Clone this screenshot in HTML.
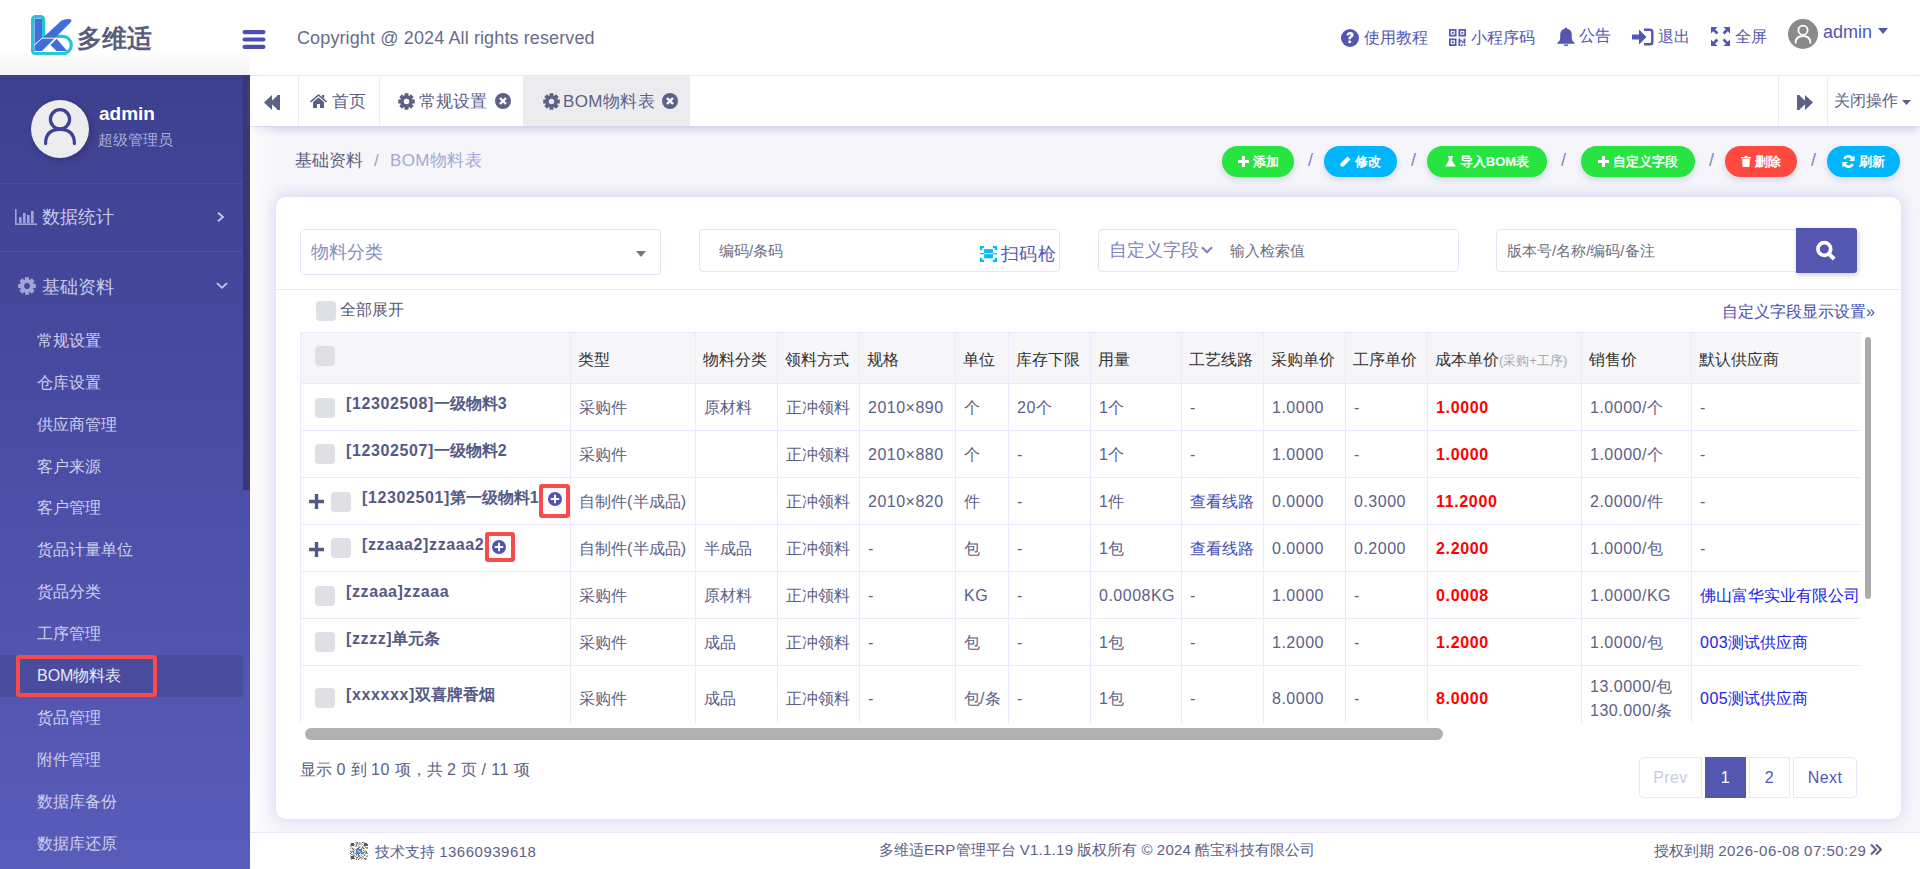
<!DOCTYPE html>
<html><head><meta charset="utf-8">
<style>
*{box-sizing:border-box;margin:0;padding:0}
html,body{width:1920px;height:869px;overflow:hidden}
body{position:relative;background:#f5f5fa;font-family:"Liberation Sans",sans-serif;color:#5d6187}
.abs{position:absolute}
svg{display:block}
#hdr{left:0;top:0;width:1920px;height:75px;background:#fff}
#side{left:0;top:75px;width:250px;height:794px;background:linear-gradient(180deg,#3d3f8e 0%,#4a4ca4 45%,#5a5cba 100%)}
#tabs{left:250px;top:75px;width:1670px;height:51px;background:#fff;border-top:1px solid #e6e5f4;box-shadow:0 5px 8px -2px rgba(140,140,220,.42)}
.t{white-space:nowrap;line-height:1}
</style></head><body>

<!-- HEADER -->
<div id="hdr" class="abs">
  <svg class="abs" style="left:25px;top:10px" width="52" height="50" viewBox="25 10 52 50">
    <path d="M32.6,19.5 a3,3 0 0 1 3,-3 h5 a3,3 0 0 1 3,3 v16.8 h19 a8.7,8.7 0 0 1 0,17.4 h-27 a3,3 0 0 1 -3,-3z" fill="none" stroke="#1ec8d6" stroke-width="3.2"/>
    <path d="M34.5,18.6 h7.5 v19.3 l-7.5,7z" fill="#426ed9"/>
    <path d="M34.5,45.6 l27,-25 q3,-1.8 7.5,-1.6 q3.5,0.3 2,3 l-29,29 h-7.5z" fill="#426ed9"/>
    <path d="M50.4,45 l6.2,-6.2 l10.6,12.2 h-10.6z" fill="#426ed9"/>
    <path d="M42,38.2 h14.5" stroke="#fff" stroke-width="0.9"/>
    <path d="M34.2,45.2 l8.3,-7.6" stroke="#fff" stroke-width="0.8"/>
  </svg>
  <div class="abs t" style="left:77px;top:26px;font-size:25px;font-weight:bold;color:#585c7e;letter-spacing:0px">多维适</div>
  <svg class="abs" style="left:242px;top:30px" width="24" height="20" viewBox="0 0 24 20">
    <rect x="0.5" y="0" width="23" height="4.2" rx="2.1" fill="#4b4fb2"/>
    <rect x="0.5" y="7.4" width="23" height="4.2" rx="2.1" fill="#4b4fb2"/>
    <rect x="0.5" y="14.8" width="23" height="4.2" rx="2.1" fill="#4b4fb2"/>
  </svg>
  <div class="abs t" style="left:297px;top:29px;font-size:18px;color:#686c88;letter-spacing:0.12px">Copyright @ 2024 All rights reserved</div>
  <!-- right icons -->
  <svg class="abs" style="left:1341px;top:29px" width="18" height="18" viewBox="0 0 18 18">
    <circle cx="9" cy="9" r="9" fill="#5356b2"/>
    <path d="M5.6,6.6 q0.2,-3.6 3.6,-3.6 q3.4,0 3.4,3 q0,1.6 -1.7,2.5 q-0.9,0.5 -0.9,1.3 v0.4 h-2.6 v-0.7 q0,-1.5 1.3,-2.3 q1.1,-0.6 1.1,-1.2 q0,-0.8 -0.9,-0.8 q-1,0 -1.2,1.4z" fill="#fff"/>
    <rect x="7.4" y="11.6" width="2.6" height="2.5" fill="#fff"/>
  </svg>
  <div class="abs t" style="left:1364px;top:30px;font-size:16px;color:#5356b2">使用教程</div>
  <svg class="abs" style="left:1449px;top:29px" width="17" height="17" viewBox="0 0 17 17" fill="#5356b2">
    <path d="M0,0h7.5v7.5h-7.5zM1.7,1.7v4.1h4.1v-4.1zM9.5,0h7.5v7.5h-7.5zM11.2,1.7v4.1h4.1v-4.1zM0,9.5h7.5v7.5h-7.5zM1.7,11.2v4.1h4.1v-4.1z" fill-rule="evenodd"/>
    <rect x="2.8" y="2.8" width="1.9" height="1.9"/><rect x="12.3" y="2.8" width="1.9" height="1.9"/><rect x="2.8" y="12.3" width="1.9" height="1.9"/>
    <rect x="9.5" y="9.5" width="1.8" height="7.5"/><rect x="11.3" y="10.8" width="1.6" height="1.6"/><rect x="12.9" y="12.2" width="1.6" height="1.8"/><rect x="14.5" y="9.5" width="1.8" height="5"/><rect x="12" y="15.3" width="1.5" height="1.7"/><rect x="14.8" y="15.3" width="1.5" height="1.7"/>
  </svg>
  <div class="abs t" style="left:1471px;top:30px;font-size:16px;color:#5356b2">小程序码</div>
  <svg class="abs" style="left:1557px;top:27px" width="18" height="19" viewBox="0 0 18 19" fill="#5356b2">
    <path d="M9,0.5 q1.2,0 1.2,1.3 q4.6,1 4.6,6.2 v3.5 q0,2.2 2.8,4.3 v1 h-17.2 v-1 q2.8,-2.1 2.8,-4.3 v-3.5 q0,-5.2 4.6,-6.2 q0,-1.3 1.2,-1.3z"/>
    <path d="M6.8,17.5 h4.4 q0,1.9 -2.2,1.9 q-2.2,0 -2.2,-1.9z"/>
  </svg>
  <div class="abs t" style="left:1579px;top:28px;font-size:16px;color:#5356b2">公告</div>
  <svg class="abs" style="left:1632px;top:28px" width="22" height="18" viewBox="0 0 22 18" fill="#5356b2">
    <path d="M0,6.5 h7 v-5 l7.5,7.5 l-7.5,7.5 v-5 h-7z"/>
    <path d="M12,0.5 h6 q3.5,0 3.5,3.5 v10 q0,3.5 -3.5,3.5 h-6 v-2.4 h5.8 q1.3,0 1.3,-1.3 v-9.6 q0,-1.3 -1.3,-1.3 h-5.8z"/>
  </svg>
  <div class="abs t" style="left:1658px;top:29px;font-size:16px;color:#5356b2">退出</div>
  <svg class="abs" style="left:1711px;top:27px" width="19" height="19" viewBox="0 0 19 19" fill="#5356b2">
    <path d="M0,0 h6.5 l-2.3,2.3 l3.2,3.2 l-1.9,1.9 l-3.2,-3.2 l-2.3,2.3z"/>
    <path d="M19,0 v6.5 l-2.3,-2.3 l-3.2,3.2 l-1.9,-1.9 l3.2,-3.2 l-2.3,-2.3z"/>
    <path d="M0,19 v-6.5 l2.3,2.3 l3.2,-3.2 l1.9,1.9 l-3.2,3.2 l2.3,2.3z"/>
    <path d="M19,19 h-6.5 l2.3,-2.3 l-3.2,-3.2 l1.9,-1.9 l3.2,3.2 l2.3,-2.3z"/>
  </svg>
  <div class="abs t" style="left:1735px;top:29px;font-size:16px;color:#5356b2">全屏</div>
  <svg class="abs" style="left:1788px;top:19px" width="30" height="30" viewBox="0 0 30 30">
    <circle cx="15" cy="15" r="15" fill="#8a8a8a"/>
    <circle cx="15" cy="11.2" r="4.6" fill="none" stroke="#fff" stroke-width="1.8"/>
    <path d="M7.5,24.5 q0,-7.5 7.5,-7.5 q7.5,0 7.5,7.5" fill="none" stroke="#fff" stroke-width="1.8"/>
  </svg>
  <div class="abs t" style="left:1823px;top:23px;font-size:18px;color:#5356b2">admin</div>
  <svg class="abs" style="left:1878px;top:28px" width="10" height="6" viewBox="0 0 10 6"><path d="M0,0h10l-5,6z" fill="#5356b2"/></svg>
</div>
<div id="side" class="abs">
  <div class="abs" style="left:243px;top:0;width:7px;height:415px;background:#353778"></div>
  <svg class="abs" style="left:31px;top:25px;filter:drop-shadow(2px 2px 3px rgba(20,20,60,.3))" width="58" height="58" viewBox="0 0 58 58">
    <circle cx="29" cy="29" r="29" fill="#ededf0"/>
    <circle cx="29" cy="19.3" r="9.6" fill="none" stroke="#3f4194" stroke-width="3.3"/>
    <path d="M14.6,43.6 q0,-14.2 14.4,-14.2 q14.4,0 14.4,14.2" fill="none" stroke="#3f4194" stroke-width="3.2" stroke-linecap="round"/>
  </svg>
  <div class="abs t" style="left:99px;top:29px;font-size:19px;font-weight:bold;color:#fff">admin</div>
  <div class="abs t" style="left:98px;top:57px;font-size:15px;color:#a9abd9">超级管理员</div>
  <div class="abs" style="left:0;top:108px;width:243px;height:1px;background:#4b4d9c"></div>
  <svg class="abs" style="left:15px;top:134px" width="22" height="16" viewBox="0 0 22 16" fill="#a2a4d6">
    <rect x="0" y="0" width="1.6" height="16"/><rect x="0" y="14.4" width="22" height="1.6"/>
    <rect x="4" y="8" width="2.6" height="6"/><rect x="8" y="4" width="2.6" height="10"/><rect x="12" y="6" width="2.6" height="8"/><rect x="16" y="2" width="2.6" height="12"/>
  </svg>
  <div class="abs t" style="left:42px;top:133px;font-size:18px;color:#c8c9ea">数据统计</div>
  <svg class="abs" style="left:217px;top:137px" width="8" height="10" viewBox="0 0 8 10"><path d="M1,0.8 l5,4.2 l-5,4.2" fill="none" stroke="#c8c9ea" stroke-width="1.8"/></svg>
  <div class="abs" style="left:0;top:176px;width:243px;height:1px;background:#4e50a2"></div>
  <svg class="abs" style="left:18px;top:202px" width="18" height="18" viewBox="0 0 18 18" fill="#a2a4d6">
    <path d="M6.85,2.76 L6.98,0.23 L11.02,0.23 L11.15,2.76 L11.89,3.07 L13.77,1.37 L16.63,4.23 L14.93,6.11 L15.24,6.85 L17.77,6.98 L17.77,11.02 L15.24,11.15 L14.93,11.89 L16.63,13.77 L13.77,16.63 L11.89,14.93 L11.15,15.24 L11.02,17.77 L6.98,17.77 L6.85,15.24 L6.11,14.93 L4.23,16.63 L1.37,13.77 L3.07,11.89 L2.76,11.15 L0.23,11.02 L0.23,6.98 L2.76,6.85 L3.07,6.11 L1.37,4.23 L4.23,1.37 L6.11,3.07Z M11.9,9 A2.9,2.9 0 1 0 6.1,9 A2.9,2.9 0 1 0 11.9,9Z" fill-rule="evenodd"/>
  </svg>
  <div class="abs t" style="left:42px;top:202.5px;font-size:18px;color:#c8c9ea">基础资料</div>
  <svg class="abs" style="left:216px;top:207px" width="12" height="8" viewBox="0 0 12 8"><path d="M1,1.2 l5,4.6 l5,-4.6" fill="none" stroke="#c8c9ea" stroke-width="1.8"/></svg>
  <div class="abs" style="left:0;top:580px;width:243px;height:42px;background:#4a4c9e"></div>
  <div class="abs t" style="left:37px;top:257.8px;font-size:16px;color:#cfd0ee">常规设置</div>
  <div class="abs t" style="left:37px;top:299.7px;font-size:16px;color:#cfd0ee">仓库设置</div>
  <div class="abs t" style="left:37px;top:341.6px;font-size:16px;color:#cfd0ee">供应商管理</div>
  <div class="abs t" style="left:37px;top:383.5px;font-size:16px;color:#cfd0ee">客户来源</div>
  <div class="abs t" style="left:37px;top:425.4px;font-size:16px;color:#cfd0ee">客户管理</div>
  <div class="abs t" style="left:37px;top:467.3px;font-size:16px;color:#cfd0ee">货品计量单位</div>
  <div class="abs t" style="left:37px;top:509.2px;font-size:16px;color:#cfd0ee">货品分类</div>
  <div class="abs t" style="left:37px;top:551.1px;font-size:16px;color:#cfd0ee">工序管理</div>
  <div class="abs t" style="left:37px;top:593.0px;font-size:16px;color:#e8e8f6">BOM物料表</div>
  <div class="abs t" style="left:37px;top:634.9px;font-size:16px;color:#cfd0ee">货品管理</div>
  <div class="abs t" style="left:37px;top:676.8px;font-size:16px;color:#cfd0ee">附件管理</div>
  <div class="abs t" style="left:37px;top:718.7px;font-size:16px;color:#cfd0ee">数据库备份</div>
  <div class="abs t" style="left:37px;top:760.6px;font-size:16px;color:#cfd0ee">数据库还原</div>
  <div class="abs" style="left:16px;top:580px;width:141px;height:42px;border:4px solid #f84b4b;border-radius:3px"></div>
</div>
<div id="tabs" class="abs">
  <svg class="abs" style="left:14px;top:19px" width="16" height="15" viewBox="0 0 16 15" fill="#5d6186"><path d="M0,7.5 l8,-7.5 v15z M6,7.5 l8,-7.5 v15z"/><rect x="13.5" y="0" width="2.5" height="15"/></svg>
  <div class="abs" style="left:48px;top:0;width:1px;height:50px;background:#ececf5"></div>
  <svg class="abs" style="left:60px;top:18px" width="17" height="14" viewBox="0 0 17 14" fill="#5d6186"><path d="M8.5,0 l8.5,7.2 l-1,1.2 l-7.5,-6.3 l-7.5,6.3 l-1,-1.2z M3,8 l5.5,-4.6 l5.5,4.6 v6 h-4 v-4 h-3 v4 h-4z M12,1 h2.2 v3.5 l-2.2,-1.8z"/></svg>
  <div class="abs t" style="left:82px;top:17px;font-size:17px;color:#5d6186">首页</div>
  <div class="abs" style="left:129px;top:0;width:1px;height:50px;background:#ececf5"></div>
  <svg class="abs" style="left:148px;top:17px" width="17" height="17" viewBox="0 0 18 18" fill="#5d6186"><path d="M6.85,2.76 L6.98,0.23 L11.02,0.23 L11.15,2.76 L11.89,3.07 L13.77,1.37 L16.63,4.23 L14.93,6.11 L15.24,6.85 L17.77,6.98 L17.77,11.02 L15.24,11.15 L14.93,11.89 L16.63,13.77 L13.77,16.63 L11.89,14.93 L11.15,15.24 L11.02,17.77 L6.98,17.77 L6.85,15.24 L6.11,14.93 L4.23,16.63 L1.37,13.77 L3.07,11.89 L2.76,11.15 L0.23,11.02 L0.23,6.98 L2.76,6.85 L3.07,6.11 L1.37,4.23 L4.23,1.37 L6.11,3.07Z M11.9,9 A2.9,2.9 0 1 0 6.1,9 A2.9,2.9 0 1 0 11.9,9Z" fill-rule="evenodd"/></svg>
  <div class="abs t" style="left:169px;top:17px;font-size:17px;color:#5d6186">常规设置</div>
  <svg class="abs" style="left:245px;top:17px" width="16" height="16" viewBox="0 0 16 16" fill="#5d6186"><circle cx="8" cy="8" r="8"/><path d="M5,5 l6,6 M11,5 l-6,6" stroke="#fff" stroke-width="2.4"/></svg>
  <div class="abs" style="left:273px;top:0;width:167px;height:50px;background:#ececee"></div>
  <svg class="abs" style="left:293px;top:17px" width="17" height="17" viewBox="0 0 18 18" fill="#5d6186"><path d="M6.85,2.76 L6.98,0.23 L11.02,0.23 L11.15,2.76 L11.89,3.07 L13.77,1.37 L16.63,4.23 L14.93,6.11 L15.24,6.85 L17.77,6.98 L17.77,11.02 L15.24,11.15 L14.93,11.89 L16.63,13.77 L13.77,16.63 L11.89,14.93 L11.15,15.24 L11.02,17.77 L6.98,17.77 L6.85,15.24 L6.11,14.93 L4.23,16.63 L1.37,13.77 L3.07,11.89 L2.76,11.15 L0.23,11.02 L0.23,6.98 L2.76,6.85 L3.07,6.11 L1.37,4.23 L4.23,1.37 L6.11,3.07Z M11.9,9 A2.9,2.9 0 1 0 6.1,9 A2.9,2.9 0 1 0 11.9,9Z" fill-rule="evenodd"/></svg>
  <div class="abs t" style="left:313px;top:17px;font-size:17px;letter-spacing:0.4px;color:#5d6186">BOM物料表</div>
  <svg class="abs" style="left:412px;top:17px" width="16" height="16" viewBox="0 0 16 16" fill="#5d6186"><circle cx="8" cy="8" r="8"/><path d="M5,5 l6,6 M11,5 l-6,6" stroke="#fff" stroke-width="2.4"/></svg>
  <div class="abs" style="left:1528px;top:0;width:1px;height:50px;background:#ececf5"></div>
  <svg class="abs" style="left:1547px;top:19px" width="16" height="15" viewBox="0 0 16 15" fill="#5d6186"><path d="M16,7.5 l-8,-7.5 v15z M10,7.5 l-8,-7.5 v15z"/><rect x="0" y="0" width="2.5" height="15"/></svg>
  <div class="abs" style="left:1577px;top:0;width:1px;height:50px;background:#ececf5"></div>
  <div class="abs t" style="left:1584px;top:17px;font-size:16px;color:#5d6186">关闭操作</div>
  <svg class="abs" style="left:1652px;top:24px" width="9" height="5" viewBox="0 0 9 5"><path d="M0,0h9l-4.5,5z" fill="#5d6186"/></svg>
</div>
<div class="abs t" style="left:295px;top:151.5px;font-size:17px;color:#5d6186">基础资料</div>
<div class="abs t" style="left:374px;top:151.5px;font-size:17px;color:#9aa0c8">/</div>
<div class="abs t" style="left:390px;top:151.5px;font-size:17px;letter-spacing:0.4px;color:#a3a8d8">BOM物料表</div>
<div class="abs" style="left:1222px;top:146px;width:72px;height:31px;border-radius:16px;background:#27e441;box-shadow:0 3px 6px rgba(80,80,140,.18);display:flex;align-items:center;justify-content:center;gap:4px;color:#fff;font-size:13px;font-weight:bold;white-space:nowrap"><svg width="11" height="11" viewBox="0 0 11 11" fill="#fff"><path d="M4,0h3v4h4v3h-4v4h-3v-4h-4v-3h4z"/></svg><span>添加</span></div>
<div class="abs t" style="left:1308px;top:151px;font-size:18px;color:#8186bd">/</div>
<div class="abs" style="left:1324px;top:146px;width:73px;height:31px;border-radius:16px;background:#00b5fc;box-shadow:0 3px 6px rgba(80,80,140,.18);display:flex;align-items:center;justify-content:center;gap:4px;color:#fff;font-size:13px;font-weight:bold;white-space:nowrap"><svg width="11" height="11" viewBox="0 0 11 11" fill="#fff"><path d="M7.5,0.5 l3,3 l-7,7 h-3 v-3z"/></svg><span>修改</span></div>
<div class="abs t" style="left:1411px;top:151px;font-size:18px;color:#8186bd">/</div>
<div class="abs" style="left:1427px;top:146px;width:120px;height:31px;border-radius:16px;background:#27e441;box-shadow:0 3px 6px rgba(80,80,140,.18);display:flex;align-items:center;justify-content:center;gap:4px;color:#fff;font-size:13px;font-weight:bold;white-space:nowrap"><svg width="11" height="11" viewBox="0 0 11 11" fill="#fff"><path d="M3,0h5v1.2h-0.8v3.2l3.6,6.1h-10.6l3.6,-6.1v-3.2h-0.8z"/></svg><span>导入BOM表</span></div>
<div class="abs t" style="left:1561px;top:151px;font-size:18px;color:#8186bd">/</div>
<div class="abs" style="left:1581px;top:146px;width:114px;height:31px;border-radius:16px;background:#27e441;box-shadow:0 3px 6px rgba(80,80,140,.18);display:flex;align-items:center;justify-content:center;gap:4px;color:#fff;font-size:13px;font-weight:bold;white-space:nowrap"><svg width="11" height="11" viewBox="0 0 11 11" fill="#fff"><path d="M4,0h3v4h4v3h-4v4h-3v-4h-4v-3h4z"/></svg><span>自定义字段</span></div>
<div class="abs t" style="left:1709px;top:151px;font-size:18px;color:#8186bd">/</div>
<div class="abs" style="left:1725px;top:146px;width:72px;height:31px;border-radius:16px;background:#fe4a3f;box-shadow:0 3px 6px rgba(80,80,140,.18);display:flex;align-items:center;justify-content:center;gap:4px;color:#fff;font-size:13px;font-weight:bold;white-space:nowrap"><svg width="10" height="11" viewBox="0 0 10 11" fill="#fff"><path d="M3.5,0h3v1h3.5v1.5h-10v-1.5h3.5z M1,3h8l-0.6,8h-6.8z"/></svg><span>删除</span></div>
<div class="abs t" style="left:1811px;top:151px;font-size:18px;color:#8186bd">/</div>
<div class="abs" style="left:1827px;top:146px;width:73px;height:31px;border-radius:16px;background:#00b5fc;box-shadow:0 3px 6px rgba(80,80,140,.18);display:flex;align-items:center;justify-content:center;gap:4px;color:#fff;font-size:13px;font-weight:bold;white-space:nowrap"><svg width="13" height="13" viewBox="0 0 13 13" fill="none" stroke="#fff" stroke-width="2.6"><path d="M10.8,5 a4.6,4.6 0 0 0 -8.6,-1.2 M2.2,8 a4.6,4.6 0 0 0 8.6,1.2"/><path d="M12.6,0.6v5.4h-5.4z M0.4,12.4v-5.4h5.4z" fill="#fff" stroke="none"/></svg><span>刷新</span></div>
<div class="abs" style="left:0;top:52px;width:250px;height:23px;background:linear-gradient(180deg,rgba(236,232,234,0) 0%,rgba(236,232,234,.55) 100%)"></div>
<div class="abs" style="left:250px;top:127px;width:30px;height:705px;background:linear-gradient(90deg,rgba(255,255,255,.75) 0%,rgba(255,255,255,0) 100%)"></div>
<div id="card" class="abs" style="left:276px;top:197px;width:1625px;height:622px;background:#fff;border-radius:10px;box-shadow:0 -1px 16px rgba(160,160,232,.4)"></div>
<div class="abs" style="left:250px;top:832px;width:1670px;height:37px;background:#fff;border-top:1px solid #e9e7f7"></div>
<div class="abs" style="left:300px;top:229px;width:361px;height:46px;border:1px solid #e6e4f7;border-radius:4px"></div>
<div class="abs t" style="left:311px;top:243px;font-size:18px;color:#8a8fc2">物料分类</div>
<svg class="abs" style="left:636px;top:251px" width="10" height="6" viewBox="0 0 10 6"><path d="M0,0h10l-5,6z" fill="#777"/></svg>
<div class="abs" style="left:699px;top:229px;width:361px;height:43px;border:1px solid #e6e4f7;border-radius:4px"></div>
<div class="abs t" style="left:719px;top:243px;font-size:15px;color:#6b6f84">编码/条码</div>
<svg class="abs" style="left:980px;top:246px" width="17" height="16" viewBox="0 0 17 16" fill="none" stroke="#0abaf8" stroke-width="2.2"><path d="M1.1,4.2V1.1H4.2 M12.8,1.1H15.9V4.2 M15.9,11.8V14.9H12.8 M4.2,14.9H1.1V11.8"/><rect x="4.1" y="3.1" width="8.8" height="9.2" fill="#0abaf8" stroke="none"/><path d="M0,7.7H17" stroke="#0abaf8" stroke-width="1.2"/><path d="M4.1,7.7H12.9" stroke="#fff" stroke-width="0.9"/></svg>
<div class="abs t" style="left:1001px;top:244.5px;font-size:18px;color:#5659b6;letter-spacing:0.3px">扫码枪</div>
<div class="abs" style="left:1098px;top:229px;width:361px;height:43px;border:1px solid #e6e4f7;border-radius:4px"></div>
<div class="abs t" style="left:1109px;top:242px;font-size:17.5px;color:#7f84c2">自定义字段</div>
<svg class="abs" style="left:1201px;top:246px" width="12" height="8" viewBox="0 0 12 8"><path d="M1,1.2 l5,5 l5,-5" fill="none" stroke="#7f84c2" stroke-width="2.2"/></svg>
<div class="abs t" style="left:1230px;top:243px;font-size:15px;color:#6b6f84">输入检索值</div>
<div class="abs" style="left:1496px;top:229px;width:302px;height:43px;border:1px solid #e6e4f7;border-radius:4px 0 0 4px"></div>
<div class="abs t" style="left:1507px;top:243px;font-size:15px;color:#6b6f84">版本号/名称/编码/备注</div>
<div class="abs" style="left:1796px;top:228px;width:61px;height:45px;background:#5457b0;border-radius:0 3px 3px 0;box-shadow:1px 2px 5px rgba(60,60,120,.25)"></div>
<svg class="abs" style="left:1814px;top:239px" width="24" height="24" viewBox="0 0 24 24"><circle cx="10.3" cy="10" r="6.4" fill="none" stroke="#fff" stroke-width="3.7"/><path d="M15,14.8 l5.2,5.2" stroke="#fff" stroke-width="3.9"/></svg>
<div class="abs" style="left:276px;top:289px;width:1625px;height:1px;background:#ebe9fa"></div>
<div class="abs" style="left:316px;top:301px;width:20px;height:20px;border-radius:4px;background:#dee0e6"></div>
<div class="abs t" style="left:340px;top:302px;font-size:16px;color:#555a7c">全部展开</div>
<div class="abs t" style="left:1722px;top:304px;font-size:16px;color:#4b4fb0">自定义字段显示设置»</div>
<div class="abs" style="left:300px;top:332px;width:1561px;height:391px;overflow:hidden">
<div class="abs" style="left:0;top:0;width:1600px;height:51px;background:#f6f6f9"></div>
<div class="abs" style="left:0;top:0px;width:1600px;height:1px;background:#ebe9fb"></div>
<div class="abs" style="left:0;top:51px;width:1600px;height:1px;background:#ebe9fb"></div>
<div class="abs" style="left:0;top:98px;width:1600px;height:1px;background:#ebe9fb"></div>
<div class="abs" style="left:0;top:145px;width:1600px;height:1px;background:#ebe9fb"></div>
<div class="abs" style="left:0;top:192px;width:1600px;height:1px;background:#ebe9fb"></div>
<div class="abs" style="left:0;top:239px;width:1600px;height:1px;background:#ebe9fb"></div>
<div class="abs" style="left:0;top:286px;width:1600px;height:1px;background:#ebe9fb"></div>
<div class="abs" style="left:0;top:333px;width:1600px;height:1px;background:#ebe9fb"></div>
<div class="abs" style="left:0px;top:0;width:1px;height:391px;background:#ebe9fb"></div>
<div class="abs" style="left:270px;top:0;width:1px;height:391px;background:#ebe9fb"></div>
<div class="abs" style="left:395px;top:0;width:1px;height:391px;background:#ebe9fb"></div>
<div class="abs" style="left:477px;top:0;width:1px;height:391px;background:#ebe9fb"></div>
<div class="abs" style="left:559px;top:0;width:1px;height:391px;background:#ebe9fb"></div>
<div class="abs" style="left:655px;top:0;width:1px;height:391px;background:#ebe9fb"></div>
<div class="abs" style="left:708px;top:0;width:1px;height:391px;background:#ebe9fb"></div>
<div class="abs" style="left:790px;top:0;width:1px;height:391px;background:#ebe9fb"></div>
<div class="abs" style="left:881px;top:0;width:1px;height:391px;background:#ebe9fb"></div>
<div class="abs" style="left:963px;top:0;width:1px;height:391px;background:#ebe9fb"></div>
<div class="abs" style="left:1045px;top:0;width:1px;height:391px;background:#ebe9fb"></div>
<div class="abs" style="left:1127px;top:0;width:1px;height:391px;background:#ebe9fb"></div>
<div class="abs" style="left:1281px;top:0;width:1px;height:391px;background:#ebe9fb"></div>
<div class="abs" style="left:1391px;top:0;width:1px;height:391px;background:#ebe9fb"></div>
<div class="abs t" style="left:278px;top:19.5px;font-size:16px;color:#333">类型</div>
<div class="abs t" style="left:403px;top:19.5px;font-size:16px;color:#333">物料分类</div>
<div class="abs t" style="left:485px;top:19.5px;font-size:16px;color:#333">领料方式</div>
<div class="abs t" style="left:567px;top:19.5px;font-size:16px;color:#333">规格</div>
<div class="abs t" style="left:663px;top:19.5px;font-size:16px;color:#333">单位</div>
<div class="abs t" style="left:716px;top:19.5px;font-size:16px;color:#333">库存下限</div>
<div class="abs t" style="left:798px;top:19.5px;font-size:16px;color:#333">用量</div>
<div class="abs t" style="left:889px;top:19.5px;font-size:16px;color:#333">工艺线路</div>
<div class="abs t" style="left:971px;top:19.5px;font-size:16px;color:#333">采购单价</div>
<div class="abs t" style="left:1053px;top:19.5px;font-size:16px;color:#333">工序单价</div>
<div class="abs t" style="left:1135px;top:19.5px;font-size:16px;color:#333">成本单价<span style="font-size:13px;color:#a9a9b4">(采购+工序)</span></div>
<div class="abs t" style="left:1289px;top:19.5px;font-size:16px;color:#333">销售价</div>
<div class="abs t" style="left:1399px;top:19.5px;font-size:16px;color:#333">默认供应商</div>
<div class="abs" style="left:15px;top:14px;width:20px;height:20px;border-radius:4px;background:#dee0e6"></div>
<div class="abs" style="left:15px;top:66px;width:20px;height:20px;border-radius:4px;background:#dee0e6"></div>
<div class="abs t" style="left:46px;top:64.0px;font-size:16px;font-weight:bold;color:#555a85"><span style="letter-spacing:0.6px">[12302508]</span>一级物料<span style="letter-spacing:0.6px">3</span></div>
<div class="abs t" style="left:279px;top:68.0px;font-size:16px;font-weight:normal;color:#5d6187">采购件</div>
<div class="abs t" style="left:404px;top:68.0px;font-size:16px;font-weight:normal;color:#5d6187">原材料</div>
<div class="abs t" style="left:486px;top:68.0px;font-size:16px;font-weight:normal;color:#5d6187">正冲领料</div>
<div class="abs t" style="left:568px;top:68.0px;font-size:16px;font-weight:normal;color:#5d6187"><span style="letter-spacing:0.5px">2010×890</span></div>
<div class="abs t" style="left:664px;top:68.0px;font-size:16px;font-weight:normal;color:#5d6187">个</div>
<div class="abs t" style="left:717px;top:68.0px;font-size:16px;font-weight:normal;color:#5d6187"><span style="letter-spacing:0.5px">20</span>个</div>
<div class="abs t" style="left:799px;top:68.0px;font-size:16px;font-weight:normal;color:#5d6187"><span style="letter-spacing:0.5px">1</span>个</div>
<div class="abs t" style="left:890px;top:68.0px;font-size:16px;font-weight:normal;color:#5d6187"><span style="letter-spacing:0.5px">-</span></div>
<div class="abs t" style="left:972px;top:68.0px;font-size:16px;font-weight:normal;color:#5d6187"><span style="letter-spacing:0.5px">1.0000</span></div>
<div class="abs t" style="left:1054px;top:68.0px;font-size:16px;font-weight:normal;color:#5d6187"><span style="letter-spacing:0.5px">-</span></div>
<div class="abs t" style="left:1136px;top:68.0px;font-size:16px;font-weight:bold;color:#ff0000"><span style="letter-spacing:0.65px">1.0000</span></div>
<div class="abs t" style="left:1290px;top:68.0px;font-size:16px;font-weight:normal;color:#5d6187"><span style="letter-spacing:0.5px">1.0000/</span>个</div>
<div class="abs t" style="left:1400px;top:68.0px;font-size:16px;font-weight:normal;color:#5d6187"><span style="letter-spacing:0.5px">-</span></div>
<div class="abs" style="left:15px;top:112px;width:20px;height:20px;border-radius:4px;background:#dee0e6"></div>
<div class="abs t" style="left:46px;top:111.0px;font-size:16px;font-weight:bold;color:#555a85"><span style="letter-spacing:0.6px">[12302507]</span>一级物料<span style="letter-spacing:0.6px">2</span></div>
<div class="abs t" style="left:279px;top:115.0px;font-size:16px;font-weight:normal;color:#5d6187">采购件</div>
<div class="abs t" style="left:486px;top:115.0px;font-size:16px;font-weight:normal;color:#5d6187">正冲领料</div>
<div class="abs t" style="left:568px;top:115.0px;font-size:16px;font-weight:normal;color:#5d6187"><span style="letter-spacing:0.5px">2010×880</span></div>
<div class="abs t" style="left:664px;top:115.0px;font-size:16px;font-weight:normal;color:#5d6187">个</div>
<div class="abs t" style="left:717px;top:115.0px;font-size:16px;font-weight:normal;color:#5d6187"><span style="letter-spacing:0.5px">-</span></div>
<div class="abs t" style="left:799px;top:115.0px;font-size:16px;font-weight:normal;color:#5d6187"><span style="letter-spacing:0.5px">1</span>个</div>
<div class="abs t" style="left:890px;top:115.0px;font-size:16px;font-weight:normal;color:#5d6187"><span style="letter-spacing:0.5px">-</span></div>
<div class="abs t" style="left:972px;top:115.0px;font-size:16px;font-weight:normal;color:#5d6187"><span style="letter-spacing:0.5px">1.0000</span></div>
<div class="abs t" style="left:1054px;top:115.0px;font-size:16px;font-weight:normal;color:#5d6187"><span style="letter-spacing:0.5px">-</span></div>
<div class="abs t" style="left:1136px;top:115.0px;font-size:16px;font-weight:bold;color:#ff0000"><span style="letter-spacing:0.65px">1.0000</span></div>
<div class="abs t" style="left:1290px;top:115.0px;font-size:16px;font-weight:normal;color:#5d6187"><span style="letter-spacing:0.5px">1.0000/</span>个</div>
<div class="abs t" style="left:1400px;top:115.0px;font-size:16px;font-weight:normal;color:#5d6187"><span style="letter-spacing:0.5px">-</span></div>
<svg class="abs" style="left:9px;top:162px" width="15" height="15" viewBox="0 0 15 15" fill="#555a85"><path d="M5.8,0h3.4v5.8h5.8v3.4h-5.8v5.8h-3.4v-5.8h-5.8v-3.4h5.8z"/></svg>
<div class="abs" style="left:31px;top:160px;width:20px;height:20px;border-radius:4px;background:#dee0e6"></div>
<div class="abs t" style="left:62px;top:158.0px;font-size:16px;font-weight:bold;color:#555a85"><span style="letter-spacing:0.6px">[12302501]</span>第一级物料<span style="letter-spacing:0.6px">1</span></div>
<div class="abs t" style="left:279px;top:162.0px;font-size:16px;font-weight:normal;color:#5d6187">自制件<span style="letter-spacing:0.5px">(</span>半成品<span style="letter-spacing:0.5px">)</span></div>
<div class="abs t" style="left:486px;top:162.0px;font-size:16px;font-weight:normal;color:#5d6187">正冲领料</div>
<div class="abs t" style="left:568px;top:162.0px;font-size:16px;font-weight:normal;color:#5d6187"><span style="letter-spacing:0.5px">2010×820</span></div>
<div class="abs t" style="left:664px;top:162.0px;font-size:16px;font-weight:normal;color:#5d6187">件</div>
<div class="abs t" style="left:717px;top:162.0px;font-size:16px;font-weight:normal;color:#5d6187"><span style="letter-spacing:0.5px">-</span></div>
<div class="abs t" style="left:799px;top:162.0px;font-size:16px;font-weight:normal;color:#5d6187"><span style="letter-spacing:0.5px">1</span>件</div>
<div class="abs t" style="left:890px;top:162.0px;font-size:16px;font-weight:normal;color:#4a4fb5">查看线路</div>
<div class="abs t" style="left:972px;top:162.0px;font-size:16px;font-weight:normal;color:#5d6187"><span style="letter-spacing:0.5px">0.0000</span></div>
<div class="abs t" style="left:1054px;top:162.0px;font-size:16px;font-weight:normal;color:#5d6187"><span style="letter-spacing:0.5px">0.3000</span></div>
<div class="abs t" style="left:1136px;top:162.0px;font-size:16px;font-weight:bold;color:#ff0000"><span style="letter-spacing:0.65px">11.2000</span></div>
<div class="abs t" style="left:1290px;top:162.0px;font-size:16px;font-weight:normal;color:#5d6187"><span style="letter-spacing:0.5px">2.0000/</span>件</div>
<div class="abs t" style="left:1400px;top:162.0px;font-size:16px;font-weight:normal;color:#5d6187"><span style="letter-spacing:0.5px">-</span></div>
<svg class="abs" style="left:9px;top:210px" width="15" height="15" viewBox="0 0 15 15" fill="#555a85"><path d="M5.8,0h3.4v5.8h5.8v3.4h-5.8v5.8h-3.4v-5.8h-5.8v-3.4h5.8z"/></svg>
<div class="abs" style="left:31px;top:206px;width:20px;height:20px;border-radius:4px;background:#dee0e6"></div>
<div class="abs t" style="left:62px;top:205.0px;font-size:16px;font-weight:bold;color:#555a85"><span style="letter-spacing:0.6px">[zzaaa2]zzaaa2</span></div>
<div class="abs t" style="left:279px;top:209.0px;font-size:16px;font-weight:normal;color:#5d6187">自制件<span style="letter-spacing:0.5px">(</span>半成品<span style="letter-spacing:0.5px">)</span></div>
<div class="abs t" style="left:404px;top:209.0px;font-size:16px;font-weight:normal;color:#5d6187">半成品</div>
<div class="abs t" style="left:486px;top:209.0px;font-size:16px;font-weight:normal;color:#5d6187">正冲领料</div>
<div class="abs t" style="left:568px;top:209.0px;font-size:16px;font-weight:normal;color:#5d6187"><span style="letter-spacing:0.5px">-</span></div>
<div class="abs t" style="left:664px;top:209.0px;font-size:16px;font-weight:normal;color:#5d6187">包</div>
<div class="abs t" style="left:717px;top:209.0px;font-size:16px;font-weight:normal;color:#5d6187"><span style="letter-spacing:0.5px">-</span></div>
<div class="abs t" style="left:799px;top:209.0px;font-size:16px;font-weight:normal;color:#5d6187"><span style="letter-spacing:0.5px">1</span>包</div>
<div class="abs t" style="left:890px;top:209.0px;font-size:16px;font-weight:normal;color:#4a4fb5">查看线路</div>
<div class="abs t" style="left:972px;top:209.0px;font-size:16px;font-weight:normal;color:#5d6187"><span style="letter-spacing:0.5px">0.0000</span></div>
<div class="abs t" style="left:1054px;top:209.0px;font-size:16px;font-weight:normal;color:#5d6187"><span style="letter-spacing:0.5px">0.2000</span></div>
<div class="abs t" style="left:1136px;top:209.0px;font-size:16px;font-weight:bold;color:#ff0000"><span style="letter-spacing:0.65px">2.2000</span></div>
<div class="abs t" style="left:1290px;top:209.0px;font-size:16px;font-weight:normal;color:#5d6187"><span style="letter-spacing:0.5px">1.0000/</span>包</div>
<div class="abs t" style="left:1400px;top:209.0px;font-size:16px;font-weight:normal;color:#5d6187"><span style="letter-spacing:0.5px">-</span></div>
<div class="abs" style="left:15px;top:254px;width:20px;height:20px;border-radius:4px;background:#dee0e6"></div>
<div class="abs t" style="left:46px;top:252.0px;font-size:16px;font-weight:bold;color:#555a85"><span style="letter-spacing:0.6px">[zzaaa]zzaaa</span></div>
<div class="abs t" style="left:279px;top:256.0px;font-size:16px;font-weight:normal;color:#5d6187">采购件</div>
<div class="abs t" style="left:404px;top:256.0px;font-size:16px;font-weight:normal;color:#5d6187">原材料</div>
<div class="abs t" style="left:486px;top:256.0px;font-size:16px;font-weight:normal;color:#5d6187">正冲领料</div>
<div class="abs t" style="left:568px;top:256.0px;font-size:16px;font-weight:normal;color:#5d6187"><span style="letter-spacing:0.5px">-</span></div>
<div class="abs t" style="left:664px;top:256.0px;font-size:16px;font-weight:normal;color:#5d6187"><span style="letter-spacing:0.5px">KG</span></div>
<div class="abs t" style="left:717px;top:256.0px;font-size:16px;font-weight:normal;color:#5d6187"><span style="letter-spacing:0.5px">-</span></div>
<div class="abs t" style="left:799px;top:256.0px;font-size:16px;font-weight:normal;color:#5d6187"><span style="letter-spacing:0.5px">0.0008KG</span></div>
<div class="abs t" style="left:890px;top:256.0px;font-size:16px;font-weight:normal;color:#5d6187"><span style="letter-spacing:0.5px">-</span></div>
<div class="abs t" style="left:972px;top:256.0px;font-size:16px;font-weight:normal;color:#5d6187"><span style="letter-spacing:0.5px">1.0000</span></div>
<div class="abs t" style="left:1054px;top:256.0px;font-size:16px;font-weight:normal;color:#5d6187"><span style="letter-spacing:0.5px">-</span></div>
<div class="abs t" style="left:1136px;top:256.0px;font-size:16px;font-weight:bold;color:#ff0000"><span style="letter-spacing:0.65px">0.0008</span></div>
<div class="abs t" style="left:1290px;top:256.0px;font-size:16px;font-weight:normal;color:#5d6187"><span style="letter-spacing:0.5px">1.0000/KG</span></div>
<div class="abs t" style="left:1400px;top:256.0px;font-size:16px;font-weight:normal;color:#2222e8">佛山富华实业有限公司</div>
<div class="abs" style="left:15px;top:300px;width:20px;height:20px;border-radius:4px;background:#dee0e6"></div>
<div class="abs t" style="left:46px;top:299.0px;font-size:16px;font-weight:bold;color:#555a85"><span style="letter-spacing:0.6px">[zzzz]</span>单元条</div>
<div class="abs t" style="left:279px;top:303.0px;font-size:16px;font-weight:normal;color:#5d6187">采购件</div>
<div class="abs t" style="left:404px;top:303.0px;font-size:16px;font-weight:normal;color:#5d6187">成品</div>
<div class="abs t" style="left:486px;top:303.0px;font-size:16px;font-weight:normal;color:#5d6187">正冲领料</div>
<div class="abs t" style="left:568px;top:303.0px;font-size:16px;font-weight:normal;color:#5d6187"><span style="letter-spacing:0.5px">-</span></div>
<div class="abs t" style="left:664px;top:303.0px;font-size:16px;font-weight:normal;color:#5d6187">包</div>
<div class="abs t" style="left:717px;top:303.0px;font-size:16px;font-weight:normal;color:#5d6187"><span style="letter-spacing:0.5px">-</span></div>
<div class="abs t" style="left:799px;top:303.0px;font-size:16px;font-weight:normal;color:#5d6187"><span style="letter-spacing:0.5px">1</span>包</div>
<div class="abs t" style="left:890px;top:303.0px;font-size:16px;font-weight:normal;color:#5d6187"><span style="letter-spacing:0.5px">-</span></div>
<div class="abs t" style="left:972px;top:303.0px;font-size:16px;font-weight:normal;color:#5d6187"><span style="letter-spacing:0.5px">1.2000</span></div>
<div class="abs t" style="left:1054px;top:303.0px;font-size:16px;font-weight:normal;color:#5d6187"><span style="letter-spacing:0.5px">-</span></div>
<div class="abs t" style="left:1136px;top:303.0px;font-size:16px;font-weight:bold;color:#ff0000"><span style="letter-spacing:0.65px">1.2000</span></div>
<div class="abs t" style="left:1290px;top:303.0px;font-size:16px;font-weight:normal;color:#5d6187"><span style="letter-spacing:0.5px">1.0000/</span>包</div>
<div class="abs t" style="left:1400px;top:303.0px;font-size:16px;font-weight:normal;color:#2222e8"><span style="letter-spacing:0.5px">003</span>测试供应商</div>
<div class="abs" style="left:15px;top:356px;width:20px;height:20px;border-radius:4px;background:#dee0e6"></div>
<div class="abs t" style="left:46px;top:354.5px;font-size:16px;font-weight:bold;color:#555a85"><span style="letter-spacing:0.6px">[xxxxxx]</span>双喜牌香烟</div>
<div class="abs t" style="left:279px;top:358.5px;font-size:16px;font-weight:normal;color:#5d6187">采购件</div>
<div class="abs t" style="left:404px;top:358.5px;font-size:16px;font-weight:normal;color:#5d6187">成品</div>
<div class="abs t" style="left:486px;top:358.5px;font-size:16px;font-weight:normal;color:#5d6187">正冲领料</div>
<div class="abs t" style="left:568px;top:358.5px;font-size:16px;font-weight:normal;color:#5d6187"><span style="letter-spacing:0.5px">-</span></div>
<div class="abs t" style="left:664px;top:358.5px;font-size:16px;font-weight:normal;color:#5d6187">包<span style="letter-spacing:0.5px">/</span>条</div>
<div class="abs t" style="left:717px;top:358.5px;font-size:16px;font-weight:normal;color:#5d6187"><span style="letter-spacing:0.5px">-</span></div>
<div class="abs t" style="left:799px;top:358.5px;font-size:16px;font-weight:normal;color:#5d6187"><span style="letter-spacing:0.5px">1</span>包</div>
<div class="abs t" style="left:890px;top:358.5px;font-size:16px;font-weight:normal;color:#5d6187"><span style="letter-spacing:0.5px">-</span></div>
<div class="abs t" style="left:972px;top:358.5px;font-size:16px;font-weight:normal;color:#5d6187"><span style="letter-spacing:0.5px">8.0000</span></div>
<div class="abs t" style="left:1054px;top:358.5px;font-size:16px;font-weight:normal;color:#5d6187"><span style="letter-spacing:0.5px">-</span></div>
<div class="abs t" style="left:1136px;top:358.5px;font-size:16px;font-weight:bold;color:#ff0000"><span style="letter-spacing:0.65px">8.0000</span></div>
<div class="abs" style="left:1290px;top:343px;font-size:16px;line-height:24px;color:#5d6187;white-space:nowrap"><span style="letter-spacing:0.5px">13.0000/</span>包<span style="letter-spacing:0.5px"><br>130.000/</span>条</div>
<div class="abs t" style="left:1400px;top:358.5px;font-size:16px;font-weight:normal;color:#2222e8"><span style="letter-spacing:0.5px">005</span>测试供应商</div>
</div>
<div class="abs" style="left:539px;top:484px;width:31px;height:34px;border:4px solid #f84b4b;border-radius:3px"></div>
<svg class="abs" style="left:548px;top:492px" width="14" height="14" viewBox="0 0 16 16"><circle cx="8" cy="8" r="8" fill="#4f53b4"/><path d="M6.9,3.2h2.2v3.7h3.7v2.2h-3.7v3.7h-2.2v-3.7h-3.7v-2.2h3.7z" fill="#fff"/></svg>
<div class="abs" style="left:485px;top:532px;width:30px;height:30px;border:4px solid #f84b4b;border-radius:3px"></div>
<svg class="abs" style="left:492px;top:539.5px" width="14" height="14" viewBox="0 0 16 16"><circle cx="8" cy="8" r="8" fill="#4f53b4"/><path d="M6.9,3.2h2.2v3.7h3.7v2.2h-3.7v3.7h-2.2v-3.7h-3.7v-2.2h3.7z" fill="#fff"/></svg>
<div class="abs" style="left:305px;top:728px;width:1138px;height:12px;border-radius:6px;background:#b0b0b0"></div>
<div class="abs" style="left:1865px;top:337px;width:6px;height:262px;border-radius:3px;background:#ababab"></div>
<div class="abs t" style="left:300px;top:762px;font-size:16px;color:#5a5f85">显示 <span style="letter-spacing:0.7px">0</span> 到 <span style="letter-spacing:0.7px">10</span> 项，共 <span style="letter-spacing:0.7px">2</span> 页 <span style="letter-spacing:0.7px">/</span> <span style="letter-spacing:0.7px">11</span> 项</div>
<div class="abs" style="left:1639px;top:757px;width:63px;height:41px;border:1px solid #e8e6f8;background:#fff;border-radius:4px 0 0 4px;color:#c8cbe0;font-size:16px;letter-spacing:0.4px;display:flex;align-items:center;justify-content:center">Prev</div>
<div class="abs" style="left:1705px;top:757px;width:41px;height:41px;border:none;background:#5457b0;border-radius:0;color:#fff;font-size:16px;letter-spacing:0.4px;display:flex;align-items:center;justify-content:center">1</div>
<div class="abs" style="left:1749px;top:757px;width:41px;height:41px;border:1px solid #e8e6f8;background:#fff;border-radius:0;color:#5457b0;font-size:16px;letter-spacing:0.4px;display:flex;align-items:center;justify-content:center">2</div>
<div class="abs" style="left:1793px;top:757px;width:64px;height:41px;border:1px solid #e8e6f8;background:#fff;border-radius:0 4px 4px 0;color:#5457b0;font-size:16px;letter-spacing:0.4px;display:flex;align-items:center;justify-content:center">Next</div>
<svg class="abs" style="left:350px;top:842px" width="18" height="18" viewBox="0 0 18 18"><defs><clipPath id="qrc"><rect width="18" height="18" rx="3.5"/></clipPath></defs><g clip-path="url(#qrc)"><rect width="18" height="18" fill="#fff"/><rect x="0" y="0" width="1" height="1" fill="rgb(140,140,140)"/><rect x="0" y="1" width="1" height="1" fill="rgb(230,230,230)"/><rect x="0" y="2" width="1" height="1" fill="rgb(230,230,230)"/><rect x="0" y="3" width="1" height="1" fill="rgb(140,140,140)"/><rect x="0" y="4" width="1" height="1" fill="rgb(170,170,170)"/><rect x="0" y="5" width="1" height="1" fill="rgb(230,230,230)"/><rect x="0" y="6" width="1" height="1" fill="rgb(200,200,200)"/><rect x="0" y="7" width="1" height="1" fill="rgb(245,245,245)"/><rect x="0" y="8" width="1" height="1" fill="rgb(230,230,230)"/><rect x="0" y="9" width="1" height="1" fill="rgb(100,100,100)"/><rect x="0" y="10" width="1" height="1" fill="rgb(230,230,230)"/><rect x="0" y="11" width="1" height="1" fill="rgb(100,100,100)"/><rect x="0" y="13" width="1" height="1" fill="rgb(200,200,200)"/><rect x="0" y="14" width="1" height="1" fill="rgb(170,170,170)"/><rect x="0" y="15" width="1" height="1" fill="rgb(230,230,230)"/><rect x="0" y="16" width="1" height="1" fill="rgb(140,140,140)"/><rect x="0" y="17" width="1" height="1" fill="rgb(140,140,140)"/><rect x="1" y="0" width="1" height="1" fill="rgb(245,245,245)"/><rect x="1" y="1" width="1" height="1" fill="rgb(200,200,200)"/><rect x="1" y="2" width="1" height="1" fill="rgb(230,230,230)"/><rect x="1" y="4" width="1" height="1" fill="rgb(230,230,230)"/><rect x="1" y="5" width="1" height="1" fill="rgb(200,200,200)"/><rect x="1" y="6" width="1" height="1" fill="rgb(200,200,200)"/><rect x="1" y="7" width="1" height="1" fill="rgb(245,245,245)"/><rect x="1" y="9" width="1" height="1" fill="rgb(140,140,140)"/><rect x="1" y="10" width="1" height="1" fill="rgb(140,140,140)"/><rect x="1" y="11" width="1" height="1" fill="rgb(245,245,245)"/><rect x="1" y="12" width="1" height="1" fill="rgb(140,140,140)"/><rect x="1" y="14" width="1" height="1" fill="rgb(230,230,230)"/><rect x="1" y="15" width="1" height="1" fill="rgb(200,200,200)"/><rect x="1" y="16" width="1" height="1" fill="rgb(245,245,245)"/><rect x="1" y="17" width="1" height="1" fill="rgb(100,100,100)"/><rect x="2" y="0" width="1" height="1" fill="rgb(245,245,245)"/><rect x="2" y="2" width="1" height="1" fill="rgb(100,100,100)"/><rect x="2" y="3" width="1" height="1" fill="rgb(140,140,140)"/><rect x="2" y="5" width="1" height="1" fill="rgb(230,230,230)"/><rect x="2" y="6" width="1" height="1" fill="rgb(100,100,100)"/><rect x="2" y="7" width="1" height="1" fill="rgb(170,170,170)"/><rect x="2" y="9" width="1" height="1" fill="rgb(100,100,100)"/><rect x="2" y="12" width="1" height="1" fill="rgb(170,170,170)"/><rect x="2" y="13" width="1" height="1" fill="rgb(200,200,200)"/><rect x="2" y="14" width="1" height="1" fill="rgb(230,230,230)"/><rect x="2" y="15" width="1" height="1" fill="rgb(245,245,245)"/><rect x="2" y="16" width="1" height="1" fill="rgb(200,200,200)"/><rect x="2" y="17" width="1" height="1" fill="rgb(245,245,245)"/><rect x="3" y="1" width="1" height="1" fill="rgb(200,200,200)"/><rect x="3" y="2" width="1" height="1" fill="rgb(200,200,200)"/><rect x="3" y="3" width="1" height="1" fill="rgb(245,245,245)"/><rect x="3" y="5" width="1" height="1" fill="rgb(230,230,230)"/><rect x="3" y="6" width="1" height="1" fill="rgb(200,200,200)"/><rect x="3" y="7" width="1" height="1" fill="rgb(140,140,140)"/><rect x="3" y="8" width="1" height="1" fill="rgb(170,170,170)"/><rect x="3" y="9" width="1" height="1" fill="rgb(100,100,100)"/><rect x="3" y="10" width="1" height="1" fill="rgb(100,100,100)"/><rect x="3" y="11" width="1" height="1" fill="rgb(140,140,140)"/><rect x="3" y="12" width="1" height="1" fill="rgb(200,200,200)"/><rect x="3" y="13" width="1" height="1" fill="rgb(140,140,140)"/><rect x="3" y="14" width="1" height="1" fill="rgb(170,170,170)"/><rect x="3" y="15" width="1" height="1" fill="rgb(245,245,245)"/><rect x="3" y="16" width="1" height="1" fill="rgb(200,200,200)"/><rect x="4" y="0" width="1" height="1" fill="rgb(245,245,245)"/><rect x="4" y="2" width="1" height="1" fill="rgb(170,170,170)"/><rect x="4" y="3" width="1" height="1" fill="rgb(200,200,200)"/><rect x="4" y="4" width="1" height="1" fill="rgb(230,230,230)"/><rect x="4" y="6" width="1" height="1" fill="rgb(200,200,200)"/><rect x="4" y="7" width="1" height="1" fill="rgb(230,230,230)"/><rect x="4" y="8" width="1" height="1" fill="rgb(170,170,170)"/><rect x="4" y="9" width="1" height="1" fill="rgb(230,230,230)"/><rect x="4" y="10" width="1" height="1" fill="rgb(230,230,230)"/><rect x="4" y="11" width="1" height="1" fill="rgb(200,200,200)"/><rect x="4" y="12" width="1" height="1" fill="rgb(230,230,230)"/><rect x="4" y="13" width="1" height="1" fill="rgb(140,140,140)"/><rect x="4" y="14" width="1" height="1" fill="rgb(170,170,170)"/><rect x="4" y="15" width="1" height="1" fill="rgb(245,245,245)"/><rect x="4" y="16" width="1" height="1" fill="rgb(100,100,100)"/><rect x="5" y="0" width="1" height="1" fill="rgb(170,170,170)"/><rect x="5" y="1" width="1" height="1" fill="rgb(230,230,230)"/><rect x="5" y="2" width="1" height="1" fill="rgb(245,245,245)"/><rect x="5" y="3" width="1" height="1" fill="rgb(245,245,245)"/><rect x="5" y="4" width="1" height="1" fill="rgb(140,140,140)"/><rect x="5" y="5" width="1" height="1" fill="rgb(245,245,245)"/><rect x="5" y="7" width="1" height="1" fill="rgb(170,170,170)"/><rect x="5" y="8" width="1" height="1" fill="rgb(230,230,230)"/><rect x="5" y="9" width="1" height="1" fill="rgb(230,230,230)"/><rect x="5" y="10" width="1" height="1" fill="rgb(230,230,230)"/><rect x="5" y="11" width="1" height="1" fill="rgb(100,100,100)"/><rect x="5" y="12" width="1" height="1" fill="rgb(245,245,245)"/><rect x="5" y="13" width="1" height="1" fill="rgb(245,245,245)"/><rect x="5" y="14" width="1" height="1" fill="rgb(140,140,140)"/><rect x="5" y="15" width="1" height="1" fill="rgb(245,245,245)"/><rect x="5" y="17" width="1" height="1" fill="rgb(230,230,230)"/><rect x="6" y="0" width="1" height="1" fill="rgb(170,170,170)"/><rect x="6" y="1" width="1" height="1" fill="rgb(170,170,170)"/><rect x="6" y="2" width="1" height="1" fill="rgb(100,100,100)"/><rect x="6" y="3" width="1" height="1" fill="rgb(100,100,100)"/><rect x="6" y="4" width="1" height="1" fill="rgb(200,200,200)"/><rect x="6" y="6" width="1" height="1" fill="rgb(245,245,245)"/><rect x="6" y="11" width="1" height="1" fill="rgb(200,200,200)"/><rect x="6" y="12" width="1" height="1" fill="rgb(100,100,100)"/><rect x="6" y="13" width="1" height="1" fill="rgb(170,170,170)"/><rect x="6" y="15" width="1" height="1" fill="rgb(100,100,100)"/><rect x="6" y="16" width="1" height="1" fill="rgb(200,200,200)"/><rect x="6" y="17" width="1" height="1" fill="rgb(140,140,140)"/><rect x="7" y="0" width="1" height="1" fill="rgb(100,100,100)"/><rect x="7" y="1" width="1" height="1" fill="rgb(170,170,170)"/><rect x="7" y="2" width="1" height="1" fill="rgb(200,200,200)"/><rect x="7" y="4" width="1" height="1" fill="rgb(200,200,200)"/><rect x="7" y="6" width="1" height="1" fill="rgb(100,100,100)"/><rect x="7" y="11" width="1" height="1" fill="rgb(100,100,100)"/><rect x="7" y="12" width="1" height="1" fill="rgb(230,230,230)"/><rect x="7" y="13" width="1" height="1" fill="rgb(230,230,230)"/><rect x="7" y="15" width="1" height="1" fill="rgb(100,100,100)"/><rect x="7" y="16" width="1" height="1" fill="rgb(200,200,200)"/><rect x="7" y="17" width="1" height="1" fill="rgb(245,245,245)"/><rect x="8" y="0" width="1" height="1" fill="rgb(230,230,230)"/><rect x="8" y="1" width="1" height="1" fill="rgb(170,170,170)"/><rect x="8" y="2" width="1" height="1" fill="rgb(230,230,230)"/><rect x="8" y="3" width="1" height="1" fill="rgb(170,170,170)"/><rect x="8" y="4" width="1" height="1" fill="rgb(230,230,230)"/><rect x="8" y="5" width="1" height="1" fill="rgb(140,140,140)"/><rect x="8" y="6" width="1" height="1" fill="rgb(100,100,100)"/><rect x="8" y="11" width="1" height="1" fill="rgb(170,170,170)"/><rect x="8" y="12" width="1" height="1" fill="rgb(100,100,100)"/><rect x="8" y="13" width="1" height="1" fill="rgb(100,100,100)"/><rect x="8" y="14" width="1" height="1" fill="rgb(100,100,100)"/><rect x="8" y="15" width="1" height="1" fill="rgb(230,230,230)"/><rect x="8" y="16" width="1" height="1" fill="rgb(230,230,230)"/><rect x="8" y="17" width="1" height="1" fill="rgb(100,100,100)"/><rect x="9" y="0" width="1" height="1" fill="rgb(140,140,140)"/><rect x="9" y="1" width="1" height="1" fill="rgb(200,200,200)"/><rect x="9" y="2" width="1" height="1" fill="rgb(170,170,170)"/><rect x="9" y="3" width="1" height="1" fill="rgb(230,230,230)"/><rect x="9" y="4" width="1" height="1" fill="rgb(170,170,170)"/><rect x="9" y="5" width="1" height="1" fill="rgb(140,140,140)"/><rect x="9" y="6" width="1" height="1" fill="rgb(245,245,245)"/><rect x="9" y="11" width="1" height="1" fill="rgb(100,100,100)"/><rect x="9" y="13" width="1" height="1" fill="rgb(170,170,170)"/><rect x="9" y="14" width="1" height="1" fill="rgb(170,170,170)"/><rect x="9" y="15" width="1" height="1" fill="rgb(170,170,170)"/><rect x="9" y="16" width="1" height="1" fill="rgb(140,140,140)"/><rect x="10" y="0" width="1" height="1" fill="rgb(200,200,200)"/><rect x="10" y="1" width="1" height="1" fill="rgb(200,200,200)"/><rect x="10" y="2" width="1" height="1" fill="rgb(200,200,200)"/><rect x="10" y="4" width="1" height="1" fill="rgb(230,230,230)"/><rect x="10" y="5" width="1" height="1" fill="rgb(200,200,200)"/><rect x="10" y="6" width="1" height="1" fill="rgb(245,245,245)"/><rect x="10" y="12" width="1" height="1" fill="rgb(230,230,230)"/><rect x="10" y="13" width="1" height="1" fill="rgb(245,245,245)"/><rect x="10" y="14" width="1" height="1" fill="rgb(230,230,230)"/><rect x="10" y="15" width="1" height="1" fill="rgb(100,100,100)"/><rect x="10" y="16" width="1" height="1" fill="rgb(230,230,230)"/><rect x="11" y="0" width="1" height="1" fill="rgb(230,230,230)"/><rect x="11" y="1" width="1" height="1" fill="rgb(170,170,170)"/><rect x="11" y="2" width="1" height="1" fill="rgb(200,200,200)"/><rect x="11" y="3" width="1" height="1" fill="rgb(245,245,245)"/><rect x="11" y="4" width="1" height="1" fill="rgb(245,245,245)"/><rect x="11" y="5" width="1" height="1" fill="rgb(245,245,245)"/><rect x="11" y="6" width="1" height="1" fill="rgb(140,140,140)"/><rect x="11" y="11" width="1" height="1" fill="rgb(170,170,170)"/><rect x="11" y="12" width="1" height="1" fill="rgb(200,200,200)"/><rect x="11" y="13" width="1" height="1" fill="rgb(170,170,170)"/><rect x="11" y="14" width="1" height="1" fill="rgb(230,230,230)"/><rect x="11" y="15" width="1" height="1" fill="rgb(170,170,170)"/><rect x="11" y="16" width="1" height="1" fill="rgb(230,230,230)"/><rect x="11" y="17" width="1" height="1" fill="rgb(170,170,170)"/><rect x="12" y="0" width="1" height="1" fill="rgb(100,100,100)"/><rect x="12" y="2" width="1" height="1" fill="rgb(200,200,200)"/><rect x="12" y="3" width="1" height="1" fill="rgb(230,230,230)"/><rect x="12" y="4" width="1" height="1" fill="rgb(170,170,170)"/><rect x="12" y="5" width="1" height="1" fill="rgb(100,100,100)"/><rect x="12" y="6" width="1" height="1" fill="rgb(200,200,200)"/><rect x="12" y="7" width="1" height="1" fill="rgb(230,230,230)"/><rect x="12" y="8" width="1" height="1" fill="rgb(230,230,230)"/><rect x="12" y="9" width="1" height="1" fill="rgb(245,245,245)"/><rect x="12" y="10" width="1" height="1" fill="rgb(140,140,140)"/><rect x="12" y="11" width="1" height="1" fill="rgb(100,100,100)"/><rect x="12" y="12" width="1" height="1" fill="rgb(245,245,245)"/><rect x="12" y="13" width="1" height="1" fill="rgb(245,245,245)"/><rect x="12" y="14" width="1" height="1" fill="rgb(170,170,170)"/><rect x="12" y="15" width="1" height="1" fill="rgb(200,200,200)"/><rect x="12" y="16" width="1" height="1" fill="rgb(170,170,170)"/><rect x="12" y="17" width="1" height="1" fill="rgb(245,245,245)"/><rect x="13" y="0" width="1" height="1" fill="rgb(170,170,170)"/><rect x="13" y="1" width="1" height="1" fill="rgb(230,230,230)"/><rect x="13" y="2" width="1" height="1" fill="rgb(245,245,245)"/><rect x="13" y="3" width="1" height="1" fill="rgb(170,170,170)"/><rect x="13" y="4" width="1" height="1" fill="rgb(245,245,245)"/><rect x="13" y="5" width="1" height="1" fill="rgb(200,200,200)"/><rect x="13" y="6" width="1" height="1" fill="rgb(100,100,100)"/><rect x="13" y="7" width="1" height="1" fill="rgb(230,230,230)"/><rect x="13" y="8" width="1" height="1" fill="rgb(100,100,100)"/><rect x="13" y="9" width="1" height="1" fill="rgb(245,245,245)"/><rect x="13" y="10" width="1" height="1" fill="rgb(100,100,100)"/><rect x="13" y="11" width="1" height="1" fill="rgb(170,170,170)"/><rect x="13" y="12" width="1" height="1" fill="rgb(170,170,170)"/><rect x="13" y="13" width="1" height="1" fill="rgb(245,245,245)"/><rect x="13" y="14" width="1" height="1" fill="rgb(200,200,200)"/><rect x="13" y="15" width="1" height="1" fill="rgb(170,170,170)"/><rect x="13" y="16" width="1" height="1" fill="rgb(230,230,230)"/><rect x="13" y="17" width="1" height="1" fill="rgb(230,230,230)"/><rect x="14" y="0" width="1" height="1" fill="rgb(170,170,170)"/><rect x="14" y="1" width="1" height="1" fill="rgb(140,140,140)"/><rect x="14" y="2" width="1" height="1" fill="rgb(170,170,170)"/><rect x="14" y="3" width="1" height="1" fill="rgb(140,140,140)"/><rect x="14" y="4" width="1" height="1" fill="rgb(170,170,170)"/><rect x="14" y="6" width="1" height="1" fill="rgb(170,170,170)"/><rect x="14" y="8" width="1" height="1" fill="rgb(230,230,230)"/><rect x="14" y="9" width="1" height="1" fill="rgb(170,170,170)"/><rect x="14" y="10" width="1" height="1" fill="rgb(170,170,170)"/><rect x="14" y="12" width="1" height="1" fill="rgb(200,200,200)"/><rect x="14" y="13" width="1" height="1" fill="rgb(100,100,100)"/><rect x="14" y="16" width="1" height="1" fill="rgb(100,100,100)"/><rect x="14" y="17" width="1" height="1" fill="rgb(230,230,230)"/><rect x="15" y="0" width="1" height="1" fill="rgb(245,245,245)"/><rect x="15" y="1" width="1" height="1" fill="rgb(245,245,245)"/><rect x="15" y="2" width="1" height="1" fill="rgb(140,140,140)"/><rect x="15" y="3" width="1" height="1" fill="rgb(170,170,170)"/><rect x="15" y="4" width="1" height="1" fill="rgb(230,230,230)"/><rect x="15" y="5" width="1" height="1" fill="rgb(140,140,140)"/><rect x="15" y="6" width="1" height="1" fill="rgb(245,245,245)"/><rect x="15" y="8" width="1" height="1" fill="rgb(170,170,170)"/><rect x="15" y="9" width="1" height="1" fill="rgb(140,140,140)"/><rect x="15" y="10" width="1" height="1" fill="rgb(170,170,170)"/><rect x="15" y="11" width="1" height="1" fill="rgb(140,140,140)"/><rect x="15" y="12" width="1" height="1" fill="rgb(245,245,245)"/><rect x="15" y="13" width="1" height="1" fill="rgb(200,200,200)"/><rect x="15" y="14" width="1" height="1" fill="rgb(245,245,245)"/><rect x="15" y="15" width="1" height="1" fill="rgb(245,245,245)"/><rect x="15" y="16" width="1" height="1" fill="rgb(100,100,100)"/><rect x="15" y="17" width="1" height="1" fill="rgb(100,100,100)"/><rect x="16" y="0" width="1" height="1" fill="rgb(230,230,230)"/><rect x="16" y="1" width="1" height="1" fill="rgb(170,170,170)"/><rect x="16" y="2" width="1" height="1" fill="rgb(170,170,170)"/><rect x="16" y="3" width="1" height="1" fill="rgb(245,245,245)"/><rect x="16" y="5" width="1" height="1" fill="rgb(140,140,140)"/><rect x="16" y="6" width="1" height="1" fill="rgb(200,200,200)"/><rect x="16" y="9" width="1" height="1" fill="rgb(140,140,140)"/><rect x="16" y="10" width="1" height="1" fill="rgb(100,100,100)"/><rect x="16" y="11" width="1" height="1" fill="rgb(170,170,170)"/><rect x="16" y="12" width="1" height="1" fill="rgb(245,245,245)"/><rect x="16" y="13" width="1" height="1" fill="rgb(245,245,245)"/><rect x="16" y="14" width="1" height="1" fill="rgb(140,140,140)"/><rect x="16" y="15" width="1" height="1" fill="rgb(230,230,230)"/><rect x="16" y="16" width="1" height="1" fill="rgb(200,200,200)"/><rect x="16" y="17" width="1" height="1" fill="rgb(170,170,170)"/><rect x="17" y="0" width="1" height="1" fill="rgb(140,140,140)"/><rect x="17" y="2" width="1" height="1" fill="rgb(100,100,100)"/><rect x="17" y="3" width="1" height="1" fill="rgb(100,100,100)"/><rect x="17" y="4" width="1" height="1" fill="rgb(230,230,230)"/><rect x="17" y="5" width="1" height="1" fill="rgb(140,140,140)"/><rect x="17" y="6" width="1" height="1" fill="rgb(170,170,170)"/><rect x="17" y="10" width="1" height="1" fill="rgb(230,230,230)"/><rect x="17" y="11" width="1" height="1" fill="rgb(140,140,140)"/><rect x="17" y="13" width="1" height="1" fill="rgb(170,170,170)"/><rect x="17" y="14" width="1" height="1" fill="rgb(170,170,170)"/><rect x="17" y="17" width="1" height="1" fill="rgb(245,245,245)"/><rect x="1" y="1" width="3" height="3" fill="#555"/><rect x="14" y="1" width="3" height="3" fill="#555"/><rect x="1" y="14" width="3" height="3" fill="#555"/><rect x="6" y="7" width="6" height="4.5" fill="#3b7fe0"/><path d="M7.5,8.2 l3,2.2" stroke="#9fd4f5" stroke-width="1.2"/></g></svg>
<div class="abs t" style="left:375px;top:844px;font-size:15px;color:#5d6187">技术支持 <span style="letter-spacing:0.5px">13660939618</span></div>
<div class="abs t" style="left:879px;top:842px;font-size:15px;color:#5d6187">多维适<span style="letter-spacing:0.25px">ERP</span>管理平台 <span style="letter-spacing:0.25px">V1.1.19</span> 版权所有 © <span style="letter-spacing:0.25px">2024</span> 酷宝科技有限公司</div>
<div class="abs t" style="left:1654px;top:843px;font-size:15px;color:#5d6187">授权到期 <span style="letter-spacing:0.5px">2026-06-08</span> <span style="letter-spacing:0.5px">07:50:29</span></div>
<svg class="abs" style="left:1870px;top:843px" width="12" height="13" viewBox="0 0 12 13" fill="none" stroke="#5d6187" stroke-width="2"><path d="M1,1.5 l5,5 l-5,5 M6,1.5 l5,5 l-5,5"/></svg>
</body></html>
